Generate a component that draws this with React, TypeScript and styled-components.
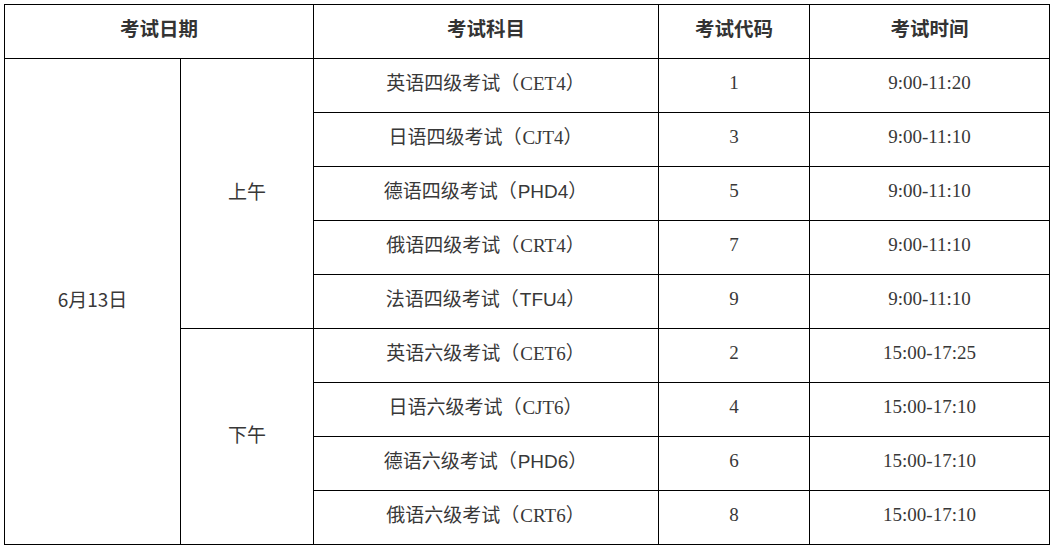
import React from "react";
import styled, { createGlobalStyle } from "styled-components";

const Global = createGlobalStyle`
  html, body { margin: 0; padding: 0; background: #fff; }
  body { font-family: "Noto Sans CJK SC", "Noto Sans", sans-serif; color: #333; }
`;

const Wrap = styled.div`
  padding: 4px 0 0 4px;
`;

const Table = styled.table`
  border-collapse: collapse;
  table-layout: fixed;
  width: 1045px;
`;

const Row = styled.tr`
  height: 54px;
`;

const Head = styled.th`
  border: 1px solid #000;
  font-family: "Noto Sans CJK SC", sans-serif;
  font-weight: 700;
  font-size: 19.5px;
  color: #333;
  text-align: center;
  vertical-align: middle;
  padding: 0 0 8px;
  line-height: 1;
`;

const Cell = styled.td<{ $serif?: boolean }>`
  border: 1px solid #000;
  font-family: ${(p) =>
    p.$serif
      ? `"Liberation Serif", "Noto Sans CJK SC", serif`
      : `"Noto Sans CJK SC", "Noto Sans", sans-serif`};
  font-weight: 400;
  font-size: 19px;
  color: #383838;
  text-align: center;
  vertical-align: middle;
  padding: 0 0 7px;
  line-height: 1;
`;

const Latin = styled.span<{ $serif?: boolean }>`
  font-family: ${(p) =>
    p.$serif ? `"Liberation Serif", serif` : `"Liberation Sans", "Noto Sans", sans-serif`};
`;

const Paren = styled.span`
  font-family: "Noto Sans CJK SC", sans-serif;
  letter-spacing: 1px;
`;

type Item = { name: string; code: React.ReactNode; num: string; time: string };

const morning: Item[] = [
  { name: "英语四级考试", code: <Latin $serif>CET4</Latin>, num: "1", time: "9:00-11:20" },
  { name: "日语四级考试", code: <Latin $serif>CJT4</Latin>, num: "3", time: "9:00-11:10" },
  { name: "德语四级考试", code: <Latin>PHD4</Latin>, num: "5", time: "9:00-11:10" },
  { name: "俄语四级考试", code: <Latin $serif>CRT4</Latin>, num: "7", time: "9:00-11:10" },
  {
    name: "法语四级考试",
    code: (
      <>
        <Latin>TFU</Latin>
        <Latin $serif>4</Latin>
      </>
    ),
    num: "9",
    time: "9:00-11:10",
  },
];

const afternoon: Item[] = [
  { name: "英语六级考试", code: <Latin $serif>CET6</Latin>, num: "2", time: "15:00-17:25" },
  { name: "日语六级考试", code: <Latin $serif>CJT6</Latin>, num: "4", time: "15:00-17:10" },
  { name: "德语六级考试", code: <Latin>PHD6</Latin>, num: "6", time: "15:00-17:10" },
  { name: "俄语六级考试", code: <Latin $serif>CRT6</Latin>, num: "8", time: "15:00-17:10" },
];

function Subject({ item }: { item: Item }) {
  return (
    <Cell>
      {item.name}
      <Paren>（</Paren>
      {item.code}
      <Paren>）</Paren>
    </Cell>
  );
}

export default function App() {
  return (
    <>
      <Global />
      <Wrap>
        <Table>
          <colgroup>
            <col style={{ width: 176 }} />
            <col style={{ width: 133 }} />
            <col style={{ width: 345 }} />
            <col style={{ width: 151 }} />
            <col style={{ width: 240 }} />
          </colgroup>
          <thead>
            <Row>
              <Head colSpan={2}>考试日期</Head>
              <Head>考试科目</Head>
              <Head>考试代码</Head>
              <Head>考试时间</Head>
            </Row>
          </thead>
          <tbody>
            {morning.map((item, i) => (
              <Row key={item.num}>
                {i === 0 && <Cell rowSpan={9}>6月13日</Cell>}
                {i === 0 && <Cell rowSpan={5}>上午</Cell>}
                <Subject item={item} />
                <Cell $serif>{item.num}</Cell>
                <Cell $serif>{item.time}</Cell>
              </Row>
            ))}
            {afternoon.map((item, i) => (
              <Row key={item.num}>
                {i === 0 && <Cell rowSpan={4}>下午</Cell>}
                <Subject item={item} />
                <Cell $serif>{item.num}</Cell>
                <Cell $serif>{item.time}</Cell>
              </Row>
            ))}
          </tbody>
        </Table>
      </Wrap>
    </>
  );
}
